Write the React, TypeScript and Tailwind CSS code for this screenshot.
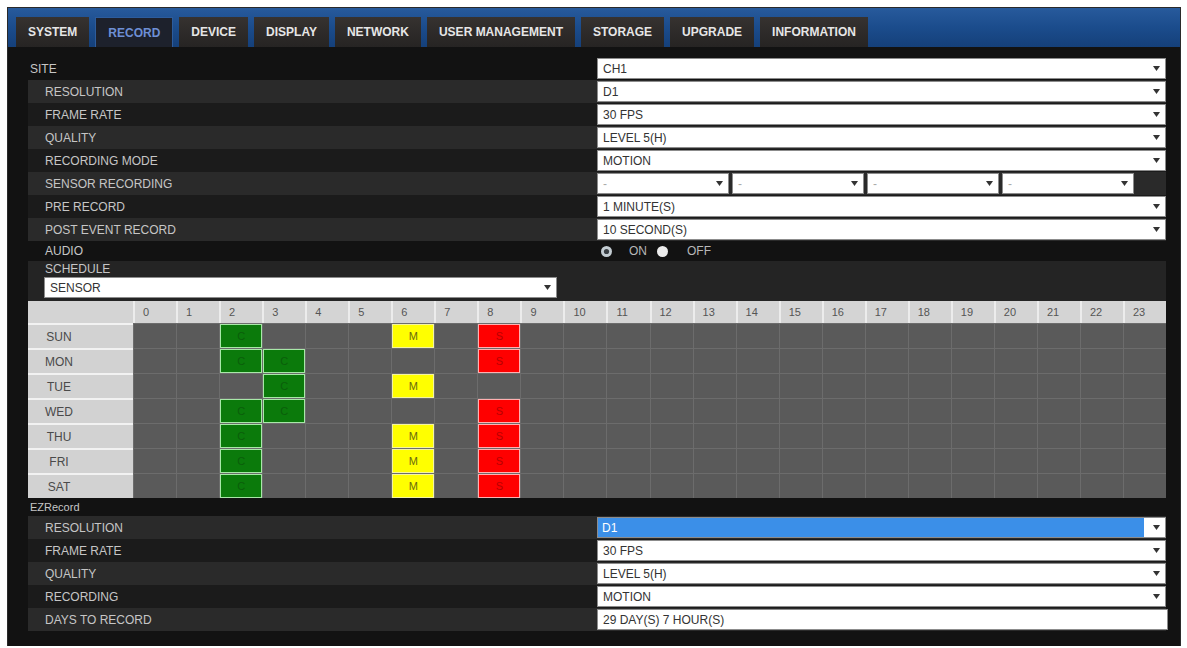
import React from 'react'

const tabs = [
  'SYSTEM',
  'RECORD',
  'DEVICE',
  'DISPLAY',
  'NETWORK',
  'USER MANAGEMENT',
  'STORAGE',
  'UPGRADE',
  'INFORMATION',
]

const days = ['SUN', 'MON', 'TUE', 'WED', 'THU', 'FRI', 'SAT']

// hour -> mode, per day
const schedule: Record<string, Record<number, 'C' | 'M' | 'S'>> = {
  SUN: { 2: 'C', 6: 'M', 8: 'S' },
  MON: { 2: 'C', 3: 'C', 8: 'S' },
  TUE: { 3: 'C', 6: 'M' },
  WED: { 2: 'C', 3: 'C', 8: 'S' },
  THU: { 2: 'C', 6: 'M', 8: 'S' },
  FRI: { 2: 'C', 6: 'M', 8: 'S' },
  SAT: { 2: 'C', 6: 'M', 8: 'S' },
}

const modeClass = {
  C: 'bg-[#0b7a0b] border border-[#a8e8a8] text-[#0a5e0a]',
  M: 'bg-[#ffff00] border border-[#f4f4a0] text-[#6a6a10]',
  S: 'bg-[#ff0000] border border-[#ffb0b0] text-[#b80000]',
}

const Caret = () => (
  <svg width="7" height="5" viewBox="0 0 7 5" className="shrink-0">
    <path d="M0 0 L7 0 L3.5 5 Z" fill="#333" />
  </svg>
)

const Select: React.FC<{ value: string; className?: string; arrow?: boolean; muted?: boolean }> = ({
  value,
  className = '',
  arrow = true,
  muted = false,
}) => (
  <div
    className={`flex h-[21px] items-center justify-between border border-[#8c8c8c] bg-white pl-[5px] pr-[5px] text-[12px] ${
      muted ? 'text-[#aaa]' : 'text-[#333]'
    } ${className}`}>
    <span>{value}</span>
    {arrow && <Caret />}
  </div>
)

const Row: React.FC<{ label: string; light?: boolean; indent?: boolean; children?: React.ReactNode }> = ({
  label,
  light = false,
  indent = true,
  children,
}) => (
  <div className={`flex h-[23px] items-center ${light ? 'bg-[#2a2a2a]' : indent ? 'bg-[#1b1b1b]' : ''}`}>
    <div className={`flex-1 text-[12px] text-[#c6c6c6] ${indent ? 'pl-[17px]' : 'pl-[2px]'}`}>{label}</div>
    <div className="w-[569px]">{children}</div>
  </div>
)

export default function App() {
  return (
    <div
      className="min-h-[648px] bg-white pl-[7px] pt-[7px]"
      style={{ fontFamily: '"Liberation Sans", Arial, sans-serif' }}>
      <div className="w-[1174px] h-[639px] bg-[#0e0e0e] border border-[#2a2a2a]">
        {/* tab bar */}
        <div className="flex h-[39px] items-end gap-[6px] bg-gradient-to-b from-[#275a9c] via-[#1b4c8c] to-[#15407a] pl-[8px]">
          {tabs.map((t) => (
            <div
              key={t}
              className={`flex h-[30px] items-center px-3 text-[12px] font-bold ${
                t === 'RECORD'
                  ? 'border-x border-t border-[#2d5c9c] bg-[#1d212c] text-[#6d8fd4]'
                  : 'bg-gradient-to-b from-[#363230] to-[#262423] text-[#e6e6e6]'
              }`}>
              {t}
            </div>
          ))}
        </div>

        <div className="bg-[#121212] pl-[20px] pr-[14px] pt-[10px]">
          <Row label="SITE" indent={false}>
            <Select value="CH1" />
          </Row>
          <Row label="RESOLUTION" light>
            <Select value="D1" />
          </Row>
          <Row label="FRAME RATE">
            <Select value="30 FPS" />
          </Row>
          <Row label="QUALITY" light>
            <Select value="LEVEL 5(H)" />
          </Row>
          <Row label="RECORDING MODE">
            <Select value="MOTION" />
          </Row>
          <Row label="SENSOR RECORDING" light>
            <div className="flex gap-[3px]">
              {[0, 1, 2, 3].map((i) => (
                <Select key={i} value="-" muted className="w-[132px] bg-white" />
              ))}
            </div>
          </Row>
          <Row label="PRE RECORD">
            <Select value="1 MINUTE(S)" />
          </Row>
          <Row label="POST EVENT RECORD" light>
            <Select value="10 SECOND(S)" />
          </Row>

          {/* audio */}
          <div className="flex h-[20px] items-center">
            <div className="flex-1 pl-[17px] text-[12px] text-[#c6c6c6]">AUDIO</div>
            <div className="flex w-[569px] items-center pl-[4px] text-[12px] text-[#b8b8b8]">
              <svg width="11" height="11" viewBox="0 0 11 11">
                <circle cx="5.5" cy="5.5" r="5.5" fill="#c3ccd2" />
                <circle cx="5.5" cy="5.5" r="2.6" fill="#3a3f44" />
              </svg>
              <span className="ml-[17px]">ON</span>
              <svg width="11" height="11" viewBox="0 0 11 11" className="ml-[10px]">
                <circle cx="5.5" cy="5.5" r="5.5" fill="#ececec" />
              </svg>
              <span className="ml-[19px]">OFF</span>
            </div>
          </div>

          {/* schedule */}
          <div className="bg-[#242424] pb-[3px] pt-[1px]">
            <div className="pl-[17px] text-[12px] leading-[15px] text-[#c6c6c6]">SCHEDULE</div>
            <Select value="SENSOR" className="ml-[16px] h-[20px] w-[513px]" />
          </div>

          <div className="grid grid-cols-[105px_repeat(24,1fr)]">
            <div className="h-[22px] bg-[#d4d4d4]" />
            {Array.from({ length: 24 }, (_, h) => (
              <div
                key={h}
                className="flex h-[22px] items-center border-l-2 border-[#ececec] bg-[#d4d4d4] pl-[8px] text-[11px] text-[#555]">
                {h}
              </div>
            ))}
            {days.map((d) => (
              <React.Fragment key={d}>
                <div className="flex h-[25px] items-center border-t-2 border-[#f2f2f2] bg-[#d2d2d2] text-[12px] text-[#4a4a4a]">
                  <span className="w-[62px] text-center">{d}</span>
                </div>
                {Array.from({ length: 24 }, (_, h) => {
                  const m = schedule[d][h]
                  return (
                    <div
                      key={h}
                      className="h-[25px] border-l border-t border-[#6c6c6c] bg-[#5a5a5a]">
                      {m && (
                        <div
                          className={`flex h-full items-center justify-center text-[11px] ${modeClass[m]}`}>
                          {m}
                        </div>
                      )}
                    </div>
                  )
                })}
              </React.Fragment>
            ))}
          </div>

          <div className="flex h-[18px] items-center pl-[2px] text-[11px] text-[#c6c6c6]">EZRecord</div>
          <Row label="RESOLUTION" light>
            <div className="flex h-[21px] items-center border border-[#8c8c8c] bg-white pr-[5px] text-[12px]">
              <span className="flex h-full flex-1 items-center bg-[#3b8fe8] pl-[4px] text-white">D1</span>
              <span className="ml-[9px]">
                <Caret />
              </span>
            </div>
          </Row>
          <Row label="FRAME RATE">
            <Select value="30 FPS" />
          </Row>
          <Row label="QUALITY" light>
            <Select value="LEVEL 5(H)" />
          </Row>
          <Row label="RECORDING">
            <Select value="MOTION" />
          </Row>
          <Row label="DAYS TO RECORD" light>
            <Select value="29 DAY(S) 7 HOUR(S)" arrow={false} className="mr-[-2px]" />
          </Row>
          <div className="h-[15px]" />
        </div>
      </div>
    </div>
  )
}
